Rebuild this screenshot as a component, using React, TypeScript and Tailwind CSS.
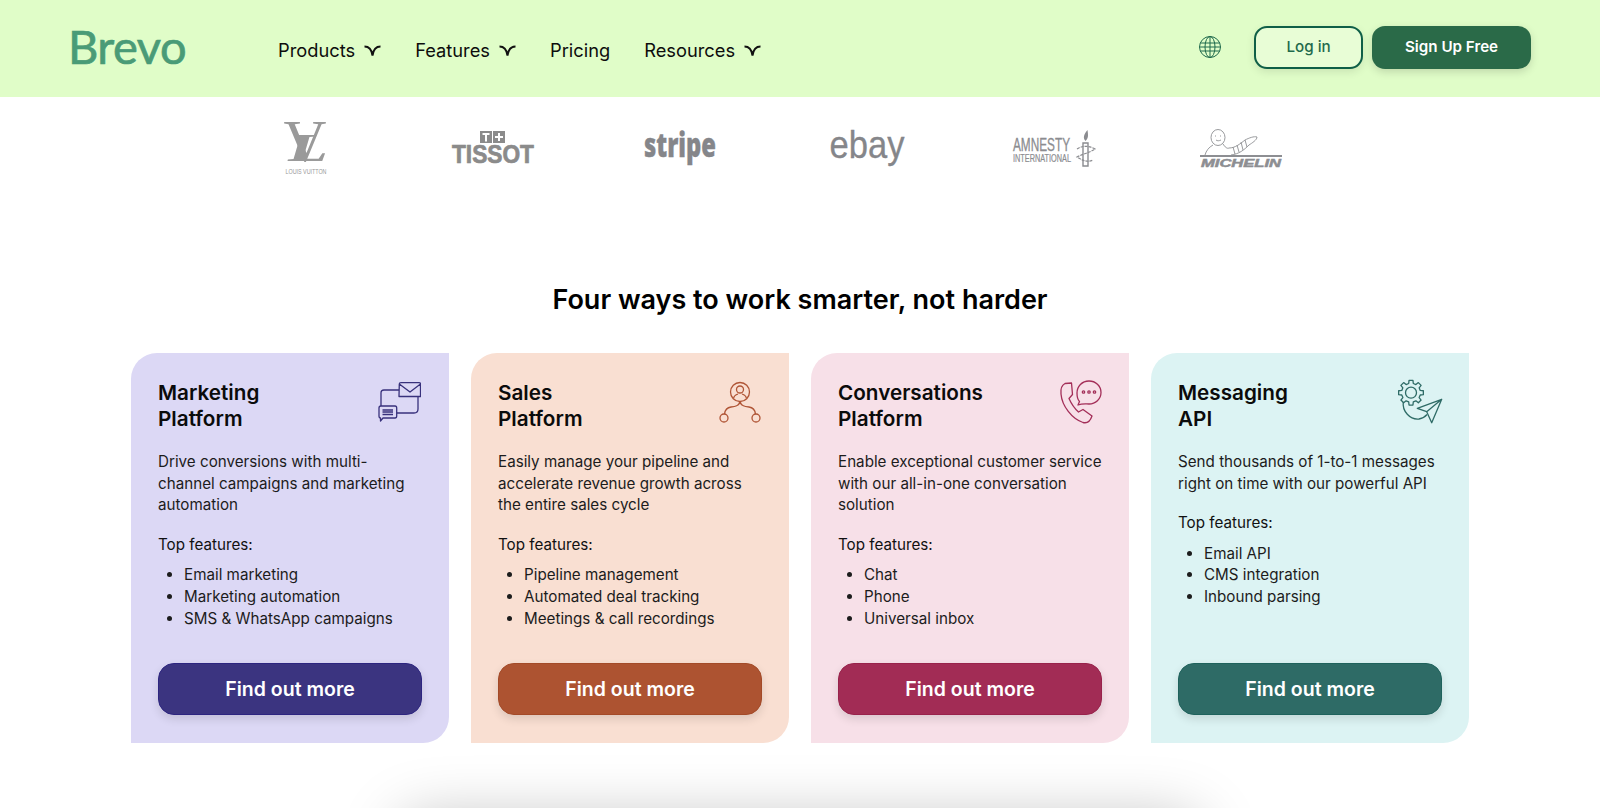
import { ReactNode } from "react";

const navItems = [
  { label: "Products", menu: true },
  { label: "Features", menu: true },
  { label: "Pricing", menu: false },
  { label: "Resources", menu: true },
];

const NavChevron = () => (
  <svg width="17" height="11" viewBox="0 0 17 11" fill="none" stroke="#111" strokeWidth="2">
    <path d="M0.5 1.5C4 1.5 7.5 3.5 8.5 10.5C9.5 3.5 13 1.5 16.5 1.5" />
  </svg>
);

const GlobeIcon = () => (
  <svg width="24" height="24" viewBox="0 0 24 24" fill="none" stroke="#1f6a4c" strokeWidth="1">
    <circle cx="12" cy="12" r="10.5" />
    <ellipse cx="12" cy="12" rx="5" ry="10.5" />
    <path d="M12 1.5V22.5M2.5 8H21.5M1.5 12H22.5M2.5 16H21.5" />
  </svg>
);

const LvLogo = () => (
  <svg width="52" height="58" viewBox="0 0 52 58" fill="#9a9a9a" fontFamily="Liberation Serif, serif" className="overflow-visible">
    <text x="25" y="42" fontSize="60" textAnchor="middle" textLength="43" lengthAdjust="spacingAndGlyphs">V</text>
    <text x="28" y="42" fontSize="40" fontStyle="italic" fontWeight="700" textAnchor="middle" textLength="40" lengthAdjust="spacingAndGlyphs">L</text>
    <text x="26" y="55" fontSize="6.5" fontFamily="Liberation Sans, sans-serif" textAnchor="middle" textLength="41" lengthAdjust="spacingAndGlyphs">LOUIS VUITTON</text>
  </svg>
);

const TissotLogo = () => (
  <svg width="84" height="36" viewBox="0 0 84 36" fontFamily="Liberation Sans, sans-serif" fontWeight="700" fill="#8b8b8b" className="overflow-visible">
    <rect x="29" y="1" width="12" height="12" />
    <rect x="42" y="1" width="12" height="12" />
    <path d="M31.5 3H38.5V5H36V11.5H34V5H31.5Z" fill="#fff" />
    <path d="M47 3H49V6H52V8H49V11H47V8H44V6H47Z" fill="#fff" />
    <text x="42" y="33" fontSize="25" stroke="#8b8b8b" strokeWidth="0.7" textAnchor="middle" textLength="82" lengthAdjust="spacingAndGlyphs">TISSOT</text>
  </svg>
);

const StripeLogo = () => (
  <svg width="76" height="36" viewBox="0 0 76 36" fill="#85868a" stroke="#85868a" strokeWidth="0.4" fontFamily="Open Sans, sans-serif" fontWeight="800" className="overflow-visible">
    <text x="38" y="27" fontSize="33" textAnchor="middle" textLength="72" lengthAdjust="spacingAndGlyphs">stripe</text>
  </svg>
);

const EbayLogo = () => (
  <svg width="76" height="36" viewBox="0 0 76 36" fill="#85868a" stroke="#85868a" strokeWidth="0.3" fontFamily="Liberation Sans, sans-serif" className="overflow-visible">
    <text x="38" y="28" fontSize="39" textAnchor="middle" textLength="75" lengthAdjust="spacingAndGlyphs">ebay</text>
  </svg>
);

const AmnestyLogo = () => (
  <svg width="84" height="38" viewBox="0 0 84 38" fontFamily="Liberation Sans, sans-serif" fill="#8b8c90" className="overflow-visible">
    <text x="1" y="22" fontSize="18" stroke="#8b8c90" strokeWidth="0.3" textLength="57" lengthAdjust="spacingAndGlyphs">AMNESTY</text>
    <text x="1" y="33" fontSize="10" stroke="#8b8c90" strokeWidth="0.2" textLength="58" lengthAdjust="spacingAndGlyphs">INTERNATIONAL</text>
    <path d="M71 14H76V37H71Z" fill="#fff" stroke="#8b8c90" strokeWidth="1.4" />
    <path d="M73.5 12C70.5 9 72 5 75.5 1C76 5 77 9 73.5 12Z" />
    <path d="M65 20C71 16 78 17 83 20C79 23 71 25 65 28C70 31 75 34 81 31" fill="none" stroke="#8b8c90" strokeWidth="1.2" strokeDasharray="3 1" />
  </svg>
);

const MichelinLogo = () => (
  <svg width="84" height="38" viewBox="0 0 84 38" fill="none" stroke="#8d8e92" strokeWidth="0.9" className="overflow-visible">
    <ellipse cx="19" cy="8.5" rx="7" ry="8" fill="#fff" />
    <path d="M16 7H17M21 7H22M17 11C18.5 12 20 12 22 11" />
    <path d="M14 16C10 18 7 22 6 26M24 15C26 18 28 20 30 19C36 19 41 15 46 11C50 9 55 7 58 8C58 11 53 14 50 16C45 21 40 25 32 26" />
    <path d="M34 18L36 25M38 16L40 23M42 13L44 21M46 11L48 18" />
    <path d="M1 27H83" strokeWidth="1.8" />
    <text x="42" y="37.5" fontSize="11" fontWeight="700" fontStyle="italic" fontFamily="Liberation Sans, sans-serif" fill="#8d8e92" stroke="#8d8e92" strokeWidth="0.5" textAnchor="middle" textLength="80" lengthAdjust="spacingAndGlyphs">MICHELIN</text>
  </svg>
);

const logos = [LvLogo, TissotLogo, StripeLogo, EbayLogo, AmnestyLogo, MichelinLogo];

const MarketingIcon = () => (
  <svg width="44" height="44" viewBox="0 0 44 44" fill="none" stroke="#38317c" strokeWidth="1.3" strokeLinejoin="round">
    <path d="M22 10H7Q4 10 4 13V26M19.5 33H37Q41 33 41 29V17" />
    <path d="M22 16.5H43.5V4Q43.5 2.7 42 2.7H24Q22.3 2.7 22.3 4ZM22.3 4L33 12L43.5 4" fill="#dcd8f5" />
    <path d="M4 26H18Q19.7 26 19.7 28V36Q19.7 38 18 38H6L3.5 41V38Q2 38 2 36V28Q2 26 4 26Z" fill="#dcd8f5" />
    <path d="M5.5 30H16M5.5 32H16M5.5 34.5H16" />
  </svg>
);

const SalesIcon = () => (
  <svg width="44" height="44" viewBox="0 0 44 44" fill="none" stroke="#b05536" strokeWidth="1.3">
    <circle cx="23" cy="12" r="9.5" />
    <circle cx="23" cy="9.5" r="3.5" />
    <path d="M16.5 18.5C17 15.5 19.5 14.5 21 14M29.5 18.5C29 15.5 26.5 14.5 25 14" />
    <path d="M23 21.5C22 26 18 26.5 14 27C10 27.5 8 30 7.5 34M23 21.5C24 26 28 26.5 32 27C36 27.5 38 30 38.5 34" />
    <circle cx="7" cy="38" r="4" />
    <circle cx="39" cy="38" r="4" />
  </svg>
);

const PhoneIcon = () => (
  <svg width="44" height="44" viewBox="0 0 44 44" fill="none" stroke="#a32e58" strokeWidth="1.3" strokeLinejoin="round" className="overflow-visible">
    <path d="M8 3.5C5 5 3.5 9 4 14C5 26 15 39 26 42.5C30 43.5 33 42 35 36L26 29.5L21.5 32C17 28 14 23 12 18.5L15.5 14.5L14.5 3Z" />
    <path d="M21 25L22.5 21.5C20.5 19.5 20 16 20 13C20 6.5 25 1 32 1C38.5 1 44 6 44 12.5C44 19 38.5 24 32 24C28 24 25 23.5 21 25Z" />
    <circle cx="26.5" cy="12" r="1.2" />
    <circle cx="32" cy="12" r="1.2" />
    <circle cx="37.5" cy="12" r="1.2" />
  </svg>
);

// eight tooth gear outline around the centre of the api icon
const gearPath = Array.from({ length: 8 }, (_, i) => {
  const point = (r: number, deg: number) => {
    const a = ((i * 45 + deg) * Math.PI) / 180;
    return `${(14 + r * Math.cos(a)).toFixed(2)} ${(12.7 + r * Math.sin(a)).toFixed(2)}`;
  };
  return `${i === 0 ? "M" : "L"}${point(9.5, -14)}L${point(12.5, -9)}L${point(12.5, 9)}L${point(9.5, 14)}`;
}).join("") + "Z";

const ApiIcon = () => (
  <svg width="44" height="44" viewBox="0 0 44 44" fill="none" stroke="#2e6b66" strokeWidth="1.3" strokeLinejoin="round" className="overflow-visible">
    <path d={gearPath} />
    <circle cx="14" cy="12.7" r="5.5" />
    <path d="M6.3 22C5 31 13 40 22 39C25 38.5 28 37 30 34.5" />
    <path d="M44.7 19.3L20.3 28.3L29.7 31.7L34.7 42.7ZM44.7 19.3L29.7 31.7" />
  </svg>
);

const cards = [
  {
    title: "Marketing",
    sub: "Platform",
    text: "Drive conversions with multi-channel campaigns and marketing automation",
    features: ["Email marketing", "Marketing automation", "SMS & WhatsApp campaigns"],
    icon: <MarketingIcon />,
    card: "bg-[#dcd8f5]",
    button: "bg-[#3b3480] border-[#2d2580]",
  },
  {
    title: "Sales",
    sub: "Platform",
    text: "Easily manage your pipeline and accelerate revenue growth across the entire sales cycle",
    features: ["Pipeline management", "Automated deal tracking", "Meetings & call recordings"],
    icon: <SalesIcon />,
    card: "bg-[#f9dfd2]",
    button: "bg-[#ad5331] border-[#a34a28]",
  },
  {
    title: "Conversations",
    sub: "Platform",
    text: "Enable exceptional customer service with our all-in-one conversation solution",
    features: ["Chat", "Phone", "Universal inbox"],
    icon: <PhoneIcon />,
    card: "bg-[#f7e0e8]",
    button: "bg-[#a22c55] border-[#98224b]",
  },
  {
    title: "Messaging",
    sub: "API",
    text: "Send thousands of 1-to-1 messages right on time with our powerful API",
    features: ["Email API", "CMS integration", "Inbound parsing"],
    icon: <ApiIcon />,
    card: "bg-[#dcf3f3]",
    button: "bg-[#2e6b66] border-[#1f625c]",
  },
];

const Card = ({ title, sub, text, features, icon, card, button }: {
  title: string; sub: string; text: string; features: string[]; icon: ReactNode; card: string; button: string;
}) => (
  <div className={`flex h-[390px] w-[318px] flex-col rounded-tl-[26px] rounded-br-[26px] px-[27px] pt-[27px] pb-[28px] ${card}`}>
    <div className="flex items-start justify-between">
      <h3 className="text-[20.7px] leading-[25.5px] font-semibold text-[#0b0b0b]">
        {title}
        <br />
        {sub}
      </h3>
      <div className="mr-[1px]">{icon}</div>
    </div>
    <p className="mt-[20px] text-[15.2px] leading-[21.6px] text-[#1c1c1c]">{text}</p>
    <p className="mt-[18px] text-[15.2px] leading-[21.6px] text-[#111]">Top features:</p>
    <ul className="mt-[9px] list-disc pl-[26px] text-[15.2px] leading-[21.6px] text-[#1c1c1c]">
      {features.map((f) => (
        <li key={f}>{f}</li>
      ))}
    </ul>
    <button className={`mt-auto h-[52px] w-full rounded-[16px] border pt-[2px] text-[19.5px] font-semibold text-white shadow-[0_4px_10px_rgba(0,0,0,0.12)] ${button}`}>
      Find out more
    </button>
  </div>
);

export default function App() {
  return (
    <div className="h-[808px] overflow-hidden bg-white font-['Inter',sans-serif]">
      <header className="flex h-[97px] items-center bg-[#e0fdc8] pr-[69px] pl-[68px]">
        <span className="mb-[4px] w-[210px] font-['Lato',sans-serif] text-[47px] leading-none tracking-[-0.5px] text-[#4a9b77] [-webkit-text-stroke:0.7px_#4a9b77]">Brevo</span>
        <nav className="flex items-center gap-[34px] pt-[4px] text-[18.3px] text-[#0d0d0d]">
          {navItems.map((item) => (
            <span key={item.label} className="flex items-center gap-[9px]">
              {item.label}
              {item.menu && <NavChevron />}
            </span>
          ))}
        </nav>
        <div className="ml-auto flex items-center pb-[3px]">
          <GlobeIcon />
          <button className="ml-[32px] h-[43px] w-[109px] rounded-[13px] border-2 border-[#0f5f47] bg-[#e8fdd6] text-[15.2px] font-medium text-[#1f6a4c] shadow-[0_3px_8px_rgba(0,0,0,0.1)]">Log in</button>
          <button className="ml-[9px] h-[43px] w-[159px] rounded-[13px] bg-[#2a6a48] text-[15.2px] font-semibold text-white shadow-[0_3px_8px_rgba(0,0,0,0.15)]">Sign Up Free</button>
        </div>
      </header>

      <div className="mt-[19px] flex h-[64px] pl-[212px]">
        {logos.map((Logo, i) => (
          <div key={i} className="flex w-[187px] items-center justify-center">
            <Logo />
          </div>
        ))}
      </div>

      <h2 className="mt-[103px] text-center text-[27px] leading-[34px] font-semibold text-black">Four ways to work smarter, not harder</h2>

      <div className="mt-[36px] flex justify-center gap-[22px]">
        {cards.map((c) => (
          <Card key={c.title} {...c} />
        ))}
      </div>

      <div className="mx-auto mt-[75px] h-[200px] w-[800px] rounded-[24px] bg-white shadow-[0_0_60px_rgba(0,0,0,0.25)]" />
    </div>
  );
}
